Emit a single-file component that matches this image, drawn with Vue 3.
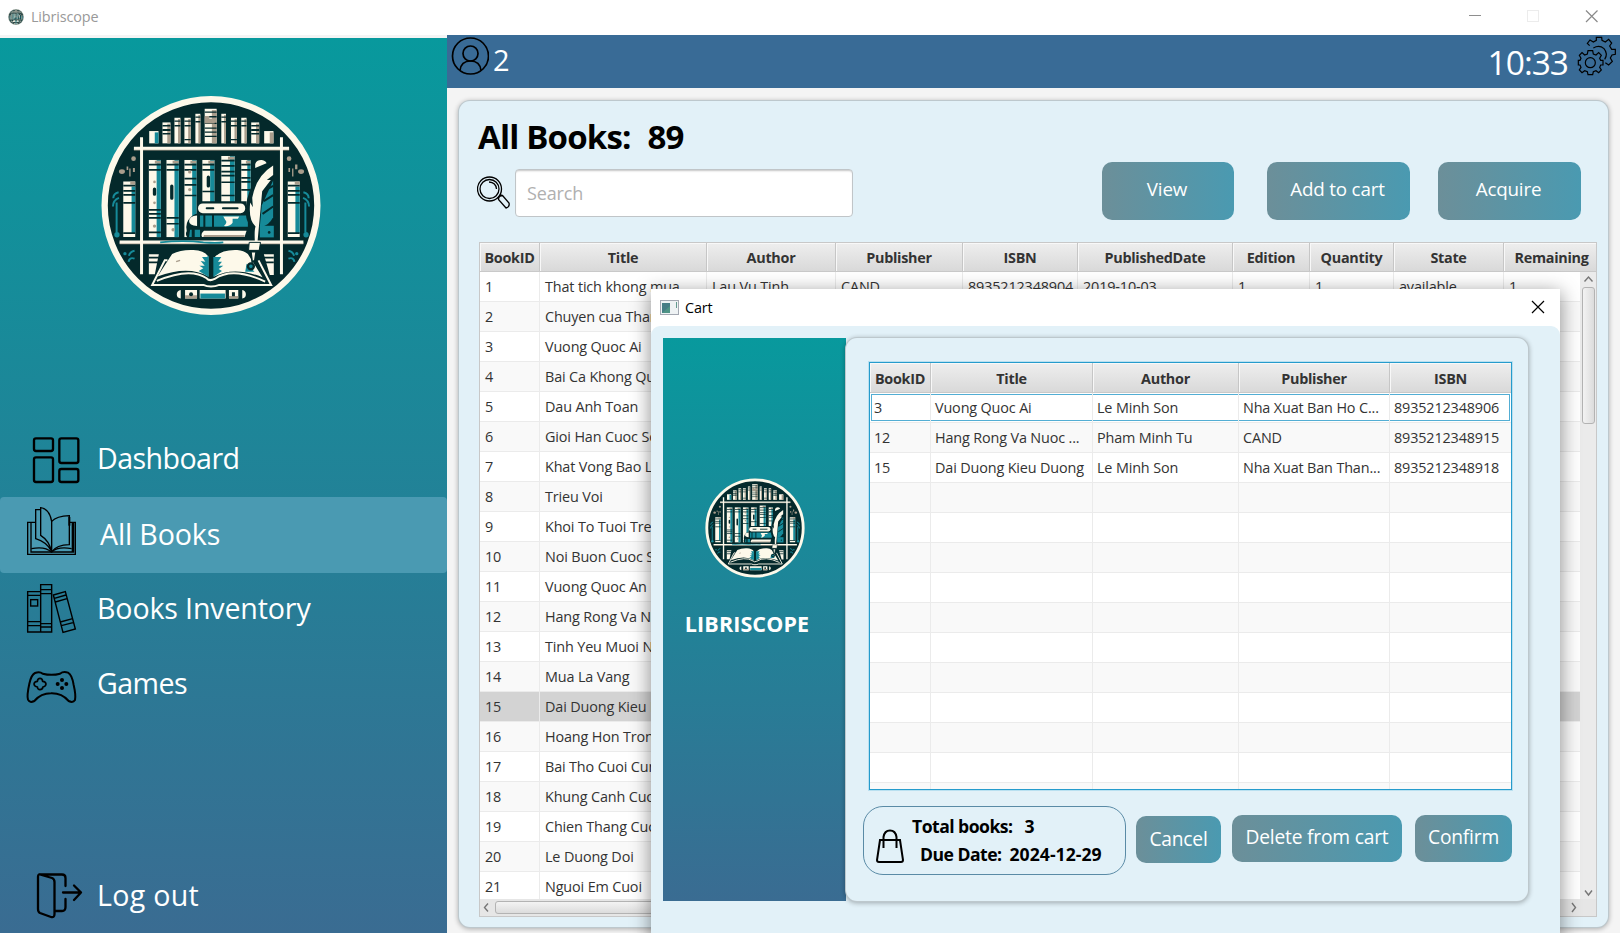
<script setup>
const columns = ['BookID', 'Title', 'Author', 'Publisher', 'ISBN', 'PublishedDate', 'Edition', 'Quantity', 'State', 'Remaining']
const titles = [
  'That tich khong mua', 'Chuyen cua Thanh', 'Vuong Quoc Ai', 'Bai Ca Khong Quen', 'Dau Anh Toan',
  'Gioi Han Cuoc Song', 'Khat Vong Bao La', 'Trieu Voi', 'Khoi To Tuoi Tre', 'Noi Buon Cuoc Song',
  'Vuong Quoc An', 'Hang Rong Va Nuoc', 'Tinh Yeu Muoi Nam', 'Mua La Vang', 'Dai Duong Kieu Duong',
  'Hoang Hon Trong', 'Bai Tho Cuoi Cung', 'Khung Canh Cuoi', 'Chien Thang Cuoi', 'Le Duong Doi', 'Nguoi Em Cuoi'
]
const books = titles.map((title, i) => [String(i + 1), title, '', '', '', '', '', '', '', ''])
books[0] = ['1', titles[0], 'Lau Vu Tinh', 'CAND', '8935212348904', '2019-10-03', '1', '1', 'available', '1']

const cartColumns = columns.slice(0, 5)
const cart = [
  ['3', 'Vuong Quoc Ai', 'Le Minh Son', 'Nha Xuat Ban Ho C...', '8935212348906'],
  ['12', 'Hang Rong Va Nuoc ...', 'Pham Minh Tu', 'CAND', '8935212348915'],
  ['15', 'Dai Duong Kieu Duong', 'Le Minh Son', 'Nha Xuat Ban Than...', '8935212348918']
]
while (cart.length < 14) cart.push(['', '', '', '', ''])

// shelf books in the emblem: x, y, width, height, shade
const topShelf = [
  [207, 151, 28, 37, 't'], [247, 125, 24, 63, 'g'], [283, 111, 18, 77, 'g'], [313, 111, 19, 77, 'g'],
  [346, 99, 15, 89, 'g'], [374, 84, 36, 104, 'g'], [424, 99, 14, 89, 'g'], [453, 111, 18, 77, 'g'],
  [484, 111, 16, 77, 'g'], [514, 125, 24, 63, 'g'], [553, 151, 28, 37, 'g']
]
const midShelf = [
  [206, 238, 36, 232, 't'], [259, 238, 37, 232, 't'], [313, 238, 36, 232, 't'],
  [367, 238, 36, 140, 't'], [424, 226, 40, 150, 't'], [484, 238, 28, 140, 't']
]
</script>

<template>
  <div class="window">
    <svg class="defs" aria-hidden="true">
      <symbol id="emblem" viewBox="62 43 662 664">
        <circle cx="393" cy="375" r="320" fill="#04292b" stroke="#fdf9ea" stroke-width="19" />
        <g v-for="(b, i) in topShelf" :key="'a' + i">
          <rect :x="b[0]" :y="b[1]" :width="b[2]" :height="b[3]" fill="#fdf9ea" />
          <rect :x="b[0] + b[2] * 0.6" :y="b[1] + 4" :width="b[2] * 0.4" :height="b[3] - 4" :fill="b[4] === 't' ? '#168a99' : '#a99d8c'" />
          <path v-if="b[3] > 40" :d="`M${b[0]} ${b[1] + 10}h${b[2]}m0 14h-${b[2]}`" stroke="#04292b" stroke-width="4" />
        </g>
        <path d="M247 147h24M247 159h24M514 147h24M514 159h24M313 177h19M453 177h18M374 128h36M374 142h36M374 154h36M374 167h36" stroke="#04292b" stroke-width="4" />
        <path d="M374 106h14v8h16v14h-30z" fill="#a99d8c" />
        <g v-for="(b, i) in midShelf" :key="'m' + i">
          <rect :x="b[0]" :y="b[1]" :width="b[2]" :height="b[3]" fill="#fdf9ea" />
          <rect :x="b[0] + b[2] * 0.65" :y="b[1]" :width="b[2] * 0.35" :height="b[3]" fill="#168a99" />
          <rect :x="b[0] + b[2] * 0.5" :y="b[1] + 2" :width="b[2] * 0.5" height="9" fill="#a99d8c" />
          <path :d="`M${b[0]} ${b[1] + 14}h${b[2]}m0 16h-${b[2]}`" stroke="#04292b" stroke-width="5" />
        </g>
        <path d="M206 388h36M206 400h36M206 412h36M206 456h36M259 412h37M259 430h37M313 294h36M313 313h36M313 345h36M367 333h36M424 273h40M424 285h40M424 305h40M424 345h40M484 292h28M484 304h28M484 328h28" stroke="#04292b" stroke-width="5" />
        <path d="M223 326v15M275 317v36M385 290v26" stroke="#04292b" stroke-width="10" stroke-linecap="round" />
        <g fill="#a99d8c">
          <circle cx="223" cy="304" r="4" /><circle cx="223" cy="367" r="4" /><circle cx="329" cy="274" r="5" />
          <circle cx="329" cy="327" r="5" /><circle cx="223" cy="437" r="5" /><circle cx="279" cy="448" r="5" />
        </g>
        <!-- outer books -->
        <path d="M129 303h36v167h-36zM624 303h36v167h-36z" fill="#fdf9ea" />
        <path d="M154 318h11v140h-11zM647 318h13v140h-13z" fill="#168a99" />
        <path d="M150 303h15v9h-15zM645 303h15v9h-15z" fill="#a99d8c" />
        <path d="M129 315h36M129 331h36M129 343h36M129 367h36M129 458h36M624 315h36M624 331h36M624 343h36M624 367h36M624 458h36" stroke="#04292b" stroke-width="5" />
        <path d="M109 366v90M115 335q-16 4-16 18M116 352q-18 7-18 26M677 366v90M671 335q16 4 16 18M670 352q18 7 18 26" stroke="#168a99" stroke-width="6" fill="none" />
        <g fill="#168a99"><circle cx="110" cy="463" r="8" /><circle cx="679" cy="463" r="8" /><circle cx="134" cy="520" r="5" /><circle cx="651" cy="520" r="5" /></g>
        <path d="M163 511q-14 3-17 15M163 535q-16-6-18 10M626 511q14 3 17 15M626 535q16-6 18 10" stroke="#168a99" stroke-width="6" fill="none" />
        <g fill="#a99d8c">
          <circle cx="160" cy="234" r="7" /><circle cx="628" cy="234" r="7" />
          <ellipse cx="125" cy="273" rx="9" ry="7" /><ellipse cx="664" cy="273" rx="9" ry="7" />
          <path d="M139 258h5v10h-5zM147 264h4v24h-4zM158 262h6v12h-6zM626 262h5v12h-5zM637 264h4v24h-4zM646 252h7v14h-7z" />
        </g>
        <!-- frame -->
        <path d="M161 207h467M118 489h553" stroke="#a99d8c" stroke-width="5" />
        <path d="M161 203h467M118 485h553M184 170v412M605 170v412" stroke="#fdf9ea" stroke-width="9" />
        <path d="M240 486q70-8 130 0q40 3 60 0" stroke="#168a99" stroke-width="5" fill="none" />
        <path d="M206 522h30l-12 60h-18zM552 522h30v62h-12z" fill="#fdf9ea" />
        <path d="M206 532h30M206 546h30M552 532h30M552 546h30" stroke="#04292b" stroke-width="5" />
        <!-- stacked books -->
        <path d="M366 362h134v116H328q-16-12-8-26q-6-26 14-44q12-10 24-10q-10-24 8-36z" fill="#04292b" />
        <rect x="354" y="369" width="142" height="29" rx="14" fill="#fdf9ea" />
        <path d="M380 383h20M429 383h44" stroke="#04292b" stroke-width="6" stroke-linecap="round" />
        <path d="M351 405q-24 2-24 17q0 14 24 15z" fill="#fdf9ea" />
        <path d="M360 405h10v34h-10zM376 405h20v34h-20zM402 405h102v34h-102z" fill="#168a99" />
        <path d="M430 408h48l-4 7h-16v12q-8 12-26 10q12-10 4-18z" fill="#fdf9ea" />
        <path d="M372 451h128l-6 19H366q-5-10 6-19z" fill="#fdf9ea" />
        <path d="M372 464h122v6H370z" fill="#a99d8c" />
        <path d="M330 448h5v22h-8zM344 448h16v22h-16z" fill="#168a99" />
        <path d="M540 436h42v35h-42z" fill="#168a99" /><circle cx="568" cy="456" r="4" fill="#04292b" />
        <path d="M526 262v-12q4-13 20-12q12 2 14 10z" fill="#fdf9ea" />
        <!-- open book -->
        <path d="M253 535l-38 77h155q8 8 23 8t23-8h158l-42-77" fill="#04292b" />
        <path d="M262 540h-8l-38 74h154q10 5 23 5t25-5h156l-38-74" stroke="#fdf9ea" stroke-width="6" fill="none" />
        <path d="M232 589l44-68q28-14 64-12q34 2 45 20v60q-60-35-153 0z" fill="#fdf9ea" />
        <path d="M402 589v-56q20-26 70-24q20 2 32 12l44 70q-85-34-146-2z" fill="#fdf9ea" />
        <path d="M386 526v64l-30-18l14-8l-12-8h16l-12-14l14 2l-10-14h14zM400 530v60l26-18l-10-6l14-10h-14l10-12h-12l10-14z" fill="#168a99" />
        <path d="M230 602q100-42 150-8q8 10 24 2q54-38 152 8" stroke="#fdf9ea" stroke-width="6" fill="none" />
        <path d="M288 544l12-4" stroke="#a99d8c" stroke-width="4" />
        <path d="M500 550l24 24h-28z" fill="#168a99" />
        <!-- quill -->
        <path d="M582 248q-72 38-84 130q-4 60 28 60q44 0 56-68z" fill="#04292b" />
        <path d="M580 300v110q-16 30-40 28l6-64z" fill="#168a99" />
        <path d="M580 344l-28 18M580 378l-32 22M580 316l-22 12" stroke="#04292b" stroke-width="6" />
        <path d="M580 255v28l-19 15h12l-26 34l-14 152h-8q-2-35 2-46q-22-20-16-72l8 14l-2-28q12-66 63-97z" fill="#fdf9ea" />
        <path d="M508 486h34l-4 24h-32z" fill="#fdf9ea" stroke="#04292b" stroke-width="3" />
        <path d="M513 514h16l-4 26l-8 5z" fill="#fdf9ea" stroke="#04292b" stroke-width="5" />
        <circle cx="513" cy="558" r="9" fill="#168a99" stroke="#04292b" stroke-width="7" />
        <!-- base ornament -->
        <path d="M302 629q-12 2-12 13t12 13zM487 629q11 2 11 13t-11 13zM315 629h36v26h-36zM359 629h78v26h-78zM447 629h28v26h-28z" fill="#fdf9ea" />
        <path d="M315 645h36v10h-36zM447 647h28v8h-28z" fill="#a99d8c" /><path d="M361 640h74v15h-74z" fill="#168a99" />
        <circle cx="333" cy="642" r="6" fill="#04292b" /><path d="M456 636h9v12h-9z" fill="#04292b" />
      </symbol>
    </svg>

    <header class="titlebar">
      <svg class="tiny"><use href="#emblem" /></svg>
      <span class="app-name">Libriscope</span>
      <svg class="controls" width="140" height="35" viewBox="0 0 140 35" fill="none">
        <path d="M4 15.500h12" stroke="#8e8e8e" />
        <rect x="62.500" y="10.500" width="11" height="11" stroke="#ececec" />
        <path d="M121 10.500l11.500 11.500M132.500 10.500L121 22" stroke="#8a8a8a" stroke-width="1.200" />
      </svg>
    </header>

    <div class="body">
      <aside class="sidebar">
        <svg class="logo"><use href="#emblem" /></svg>
        <nav>
          <a class="item">
            <svg width="97" height="77" viewBox="0 0 291 231" fill="none" stroke="#000" stroke-width="7">
              <rect x="102" y="55" width="57" height="38" rx="6" /><rect x="178" y="55" width="57" height="74" rx="6" />
              <rect x="102" y="112" width="57" height="74" rx="6" /><rect x="178" y="147" width="57" height="39" rx="6" />
            </svg>
            <span class="tight">Dashboard</span>
          </a>
          <a class="item active">
            <svg width="100" height="76" viewBox="0 231 300 228" fill="none" stroke="#000" stroke-width="4">
              <path d="M106 307H83V403H226V307H210" />
              <path d="M93 309V396H217V309M221 309V398" />
              <path d="M122 269H107V356Q140 366 154 393M122 263Q148 266 155 304V396Q148 362 122 346V263Z" />
              <path d="M155 304Q170 288 208 287V374Q170 374 155 396" /><path d="M208 291v26" stroke-width="6" />
              <path d="M94 386Q135 378 154 396Q175 378 215 386" />
            </svg>
            <span>All Books</span>
          </a>
          <a class="item up">
            <svg width="97" height="75" viewBox="0 459 291 225" fill="none" stroke="#000" stroke-width="4.200">
              <path d="M83 515H122V636H83ZM122 494H155V636H122ZM83 526H122M83 605H122M83 617H122M122 509H155M122 521H155M122 611H155M122 621H155" />
              <rect x="92" y="539" width="21" height="19" />
              <path d="M160 525L196 515L226 627L189 637ZM163 535L198 525M166 546L201 536M181 606L218 596M184 617L222 607" />
            </svg>
            <span>Books Inventory</span>
          </a>
          <a class="item up">
            <svg width="97" height="75" viewBox="0 684 291 225" fill="none" stroke="#000" stroke-width="6">
              <path d="M105 759Q119 753 128 761Q155 768 180 761Q190 753 204 758Q216 764 221 795Q228 825 225 840Q219 850 206 843Q185 819 153 820Q123 820 103 843Q89 850 84 839Q80 827 88 791Q94 764 105 759Z" />
              <path d="M120 775Q127 775 128 784Q137 785 138 792Q137 800 129 801Q127 809 120 809Q113 809 112 801Q103 800 102 792Q103 785 112 784Q113 775 120 775Z" stroke-width="5" />
              <g fill="#000" stroke="none"><circle cx="186" cy="780" r="6" /><circle cx="173" cy="792" r="6" /><circle cx="199" cy="792" r="6" /><circle cx="186" cy="804" r="6" /></g>
            </svg>
            <span class="tight">Games</span>
          </a>
        </nav>
        <a class="item logout">
          <svg width="97" height="60" viewBox="0 864 97 60" fill="none" stroke="#000" stroke-width="2.300" stroke-linecap="round" stroke-linejoin="round">
            <path d="M40 874.500L52 878Q54.500 879 54.500 882V914Q54.500 918 51 917L40 913Q38 912 38 909V877Q38 874 40 874.500H62Q65.500 874.500 65.500 878V886M65.500 899V907Q65.500 911 62 911H55" />
            <path d="M63 892.500H81M74 885.500L81 892.500L74 900" />
          </svg>
          <span>Log out</span>
        </a>
      </aside>

      <section class="content">
        <div class="topbar">
          <svg width="42" height="53" viewBox="0 0 42 53" fill="none" stroke="#000" stroke-width="1.700">
            <circle cx="23.500" cy="21" r="18" /><circle cx="23.500" cy="18.500" r="7.500" />
            <path d="M13 35.500Q14 26 23.500 26T34 35.500" />
          </svg>
          <span class="user">2</span>
          <span class="clock">10:33</span>
          <svg width="50" height="53" viewBox="0 9 150 159" fill="none" stroke="#000" stroke-width="3.600">
            <path d="M59 41L52 34L60 24L70 30L79 25V16H95L96 25L106 30L116 22L125 33L119 42L125 52H136V67L126 69L121 78L127 88L116 99L106 92" />
            <path d="M70 48Q88 38 102 50Q115 66 104 82" />
            <path d="M54 56H68L70 66L78 69L86 62L94 70L89 79L92 85H99V99H92L89 106L94 114L86 122L78 116L70 119L68 128H54L52 119L44 116L36 122L28 114L33 106L30 99H25V85H30L33 79L28 70L36 62L44 69L52 66Z" />
            <circle cx="61" cy="92" r="15" />
          </svg>
        </div>

        <main class="panel">
          <h1><span>All Books:</span><span>89</span></h1>
          <div class="tools">
            <svg width="37" height="48" viewBox="0 0 37 48" fill="none" stroke="#000" stroke-width="1.300">
              <circle cx="12.500" cy="19" r="12" /><circle cx="12.500" cy="19" r="9.500" />
              <path d="M12 12Q19 12.500 19.500 19M22 27l3-2M20.500 28.500l3.500-4M21.500 29.500q0-4 4-4L32 33q1 4-3 5z" />
            </svg>
            <div class="search">Search</div>
            <div class="actions">
              <button class="btn view">View</button>
              <button class="btn">Add to cart</button>
              <button class="btn">Acquire</button>
            </div>
          </div>

          <div class="table">
            <div class="row head"><div v-for="c in columns" :key="c">{{ c }}</div></div>
            <div class="viewport">
              <div class="rows">
                <div v-for="b in books" :key="b[0]" class="row" :class="{ selected: b[0] === '15' }">
                  <div v-for="(v, j) in b" :key="j">{{ v }}</div>
                </div>
              </div>
              <div class="vbar">
                <svg width="17" height="15" viewBox="0 0 17 15"><path d="M4.500 9.500l4-4.500 4 4.500" /></svg>
                <div class="vthumb"></div>
                <svg class="down" width="17" height="15" viewBox="0 0 17 15"><path d="M5 6.500l3.500 4.500L12 6.500" /></svg>
              </div>
            </div>
            <div class="hbar">
              <svg width="15" height="17" viewBox="0 0 15 17"><path d="M8 4.500L4.500 8.500l3.500 4" /></svg>
              <div class="hthumb"></div>
              <svg width="31" height="17" viewBox="0 0 31 17"><path d="M7 4l3.500 4.500L7 13" /></svg>
            </div>
          </div>
        </main>
      </section>
    </div>

    <div class="dialog">
      <div class="dialog-title">
        <svg width="19" height="16" viewBox="0 0 19 16">
          <rect x=".5" y=".5" width="18" height="14" fill="#eef2f4" stroke="#a3a8b2" />
          <rect x="2" y="3" width="8" height="10" fill="#4f9486" /><path d="M2 3h8v3l-8 7z" fill="#467e86" /><path d="M16.500 2v6" stroke="#63998f" />
        </svg>
        <span>Cart</span>
        <svg class="x" width="14" height="14" viewBox="0 0 14 14"><path d="M1 1l12 12M13 1L1 13" stroke="#000" stroke-width="1.200" /></svg>
      </div>
      <div class="dialog-body">
        <div class="brand">
          <svg><use href="#emblem" /></svg>
          <strong>LIBRISCOPE</strong>
        </div>
        <div class="cart">
          <div class="cart-table">
            <div class="row head"><div v-for="c in cartColumns" :key="c">{{ c }}</div></div>
            <div v-for="(b, i) in cart" :key="i" class="row" :class="{ focused: i === 0 }">
              <div v-for="(v, j) in b" :key="j">{{ v }}</div>
            </div>
          </div>
          <div class="footer">
            <div class="summary">
              <svg width="28" height="34" viewBox="0 0 28 34" fill="none" stroke="#000" stroke-width="2">
                <path d="M4 11H24L27 31Q27 33 25 33H3Q1 33 1 31ZM7.500 19V8Q8.500 1.500 14 1.500T20.500 8V19" />
              </svg>
              <div class="facts">
                <p><span>Total books:</span><span>3</span></p>
                <p class="due"><span>Due Date:</span><span class="date">2024-12-29</span></p>
              </div>
            </div>
            <button class="btn cancel">Cancel</button>
            <button class="btn delete">Delete from cart</button>
            <button class="btn confirm">Confirm</button>
          </div>
        </div>
      </div>
    </div>
  </div>
</template>

<style>
body { overflow: hidden; }
</style>

<style scoped>
* { box-sizing: border-box; }
.window { position: relative; width: 1620px; height: 933px; overflow: hidden; background: #f4f4f4; display: flex; flex-direction: column; font-family: "Open Sans", "Noto Sans", sans-serif; font-size: 14.4px; letter-spacing: -0.01em; color: #333; }
.defs { position: absolute; width: 0; height: 0; }
span, strong { white-space: pre; }
svg { flex: none; display: block; }

.titlebar { height: 35px; flex: none; background: #fff; display: flex; align-items: center; padding-left: 8px; }
.tiny { width: 16px; height: 16px; margin-bottom: 2px; }
.app-name { margin-left: 7px; color: #999; padding-bottom: 2px; }
.controls { margin-left: auto; margin-right: 15px; }

.body { flex: 1; min-height: 0; display: flex; }
.sidebar { width: 447px; margin-top: 3px; display: flex; flex-direction: column; background: linear-gradient(#08999d, #3a6c92); }
.logo { width: 220px; height: 221px; margin: 57px 0 0 101px; }
nav { margin-top: 104px; }
.item { display: flex; align-items: center; height: 75px; color: #fff; font-size: 28.6px; }
.item span { padding-bottom: 3px; }
.item .tight { letter-spacing: -0.02em; }
.item.up span { padding-bottom: 6px; }
.item:first-child { height: 77px; }
.item.active { height: 76px; background: #4a9ab2; border-radius: 4px; }
.item.logout { height: 60px; margin-top: auto; margin-bottom: 9px; }
.item.logout span { padding-bottom: 0; letter-spacing: 0.01em; }

.content { flex: 1; display: flex; flex-direction: column; }
.topbar { height: 53px; flex: none; background: #396b96; display: flex; align-items: center; color: #fff; }
.user { font-size: 29px; margin-left: 4px; padding-bottom: 4px; }
.clock { font-size: 33.5px; margin-left: auto; margin-right: 2px; letter-spacing: -0.03em; }

.panel { width: 1149px; height: 826px; margin: 13px 0 0 12px; padding: 16px 0 0 20px; background: #e2f1f8; border-radius: 11px; box-shadow: 0 0 0 1px #bdc8cd, 0 1px 5px 1px rgba(0, 0, 0, .3); }
h1 { margin: 0 0 0 -1px; height: 40px; line-height: 40px; font-size: 33px; color: #000; display: flex; gap: 17px; letter-spacing: -0.025em; }
.tools { display: flex; height: 85px; padding-top: 4px; margin-left: -2px; }
.tools > svg { margin: 9px 1px 0 0; }
.search { width: 338px; height: 48px; margin-top: 8px; background: #fff; border: 1px solid #c0c5c8; border-radius: 4px; box-shadow: inset 0 2px 2px -1px #c5c5c5; padding-left: 11px; line-height: 46px; font-size: 18px; color: #b0b0b0; }
.actions { display: flex; gap: 28px; margin: 1px 0 0 249px; }
.btn { border: 0; padding: 0 0 5px; font-family: inherit; font-size: 19.200px; letter-spacing: -0.01em; color: #fff; white-space: nowrap; background: linear-gradient(90deg, #6c8f99, #4a9ab1); border-radius: 10px; height: 58px; width: 143px; }
.btn.view { width: 132px; margin-right: 5px; padding-right: 6px; }
.actions .btn { font-size: 18.800px; padding-bottom: 4px; padding-right: 2px; }

.table { width: 1118px; height: 675px; display: flex; flex-direction: column; background: #fff; border: 1px solid #c8c8c8; overflow: hidden; }
.row { display: grid; grid-template-columns: 60px 167px 129px 127px 115px 155px 77px 84px 110px 96px; height: 30px; border-bottom: 1px solid #ebebeb; }
.row > div { padding-left: 5px; line-height: 29px; white-space: nowrap; overflow: hidden; border-right: 1px solid #ebebeb; }
.row:nth-child(even) { background: #f9f9f9; }
.row.selected { background: #d3d3d3; }
.row.head { flex: none; height: 29px; background: linear-gradient(#eee, #d9d9d9); border-color: #c9c9c9; }
.row.head > div { padding: 0; line-height: 29px; font-weight: 700; letter-spacing: -0.02em; text-align: center; border-color: #c6c6c6; box-shadow: inset 1px 1px 0 #f8f8f8; }
.viewport { flex: 1; min-height: 0; display: flex; }
.rows { width: 1100px; flex: none; overflow: hidden; }
.vbar { flex: 1; background: #ebebeb; display: flex; flex-direction: column; }
.vbar path, .hbar path { fill: none; stroke: #777; stroke-width: 1.400; }
.vthumb { width: 13px; height: 137px; margin-left: 2px; border: 1px solid #b3b3b3; border-radius: 3px; background: linear-gradient(90deg, #f3f3f3, #dcdcdc); }
.down { margin-top: auto; }
.hbar { height: 17px; flex: none; background: #e6e6e6; display: flex; }
.hthumb { flex: 1; height: 13px; margin-top: 2px; margin-right: 340px; border: 1px solid #b3b3b3; border-radius: 3px; background: linear-gradient(#f3f3f3, #dcdcdc); }

.dialog { position: absolute; left: 651px; top: 289px; width: 909px; height: 660px; background: #fff; box-shadow: 0 4px 18px 1px rgba(0, 0, 0, .42); }
.dialog-title { height: 37px; display: flex; align-items: center; padding-left: 9px; color: #000; }
.dialog-title span { margin-left: 6px; }
.dialog-title .x { margin: 0 15px 2px auto; }
.dialog-body { height: 623px; background: #e2f1f8; border-radius: 9px 9px 0 0; display: flex; padding: 12px 0 0 12px; }
.brand { width: 183px; height: 563px; background: linear-gradient(#08999d, #3a6c92); display: flex; flex-direction: column; align-items: center; color: #fff; }
.brand svg { width: 100px; height: 100px; margin-top: 140px; }
.brand strong { font-size: 21.500px; letter-spacing: 0.005em; margin: 31px 15px 0 0; }
.cart { width: 682px; height: 563px; border-radius: 11px; background: #e2f1f8; box-shadow: 0 0 0 1px #bdc8cd, 0 1px 5px 1px rgba(0, 0, 0, .3); padding: 24px 0 0 17px; }
.cart-table { width: 643px; height: 428px; margin-left: 6px; background: #fff; border: 1px solid #259bcc; box-shadow: 0 0 0 1px #b9e0f0; overflow: hidden; }
.cart-table .row { grid-template-columns: 61px 162px 146px 151px 122px; }
.cart-table .row > div { padding-left: 4px; }
.cart-table .row:nth-child(odd) { background: #f9f9f9; }
.cart-table .row:nth-child(2n) { background: #fff; }
.cart-table .row.head { height: 30px; background: linear-gradient(#eee, #d9d9d9); }
.cart-table .row.head > div { padding: 0; line-height: 31px; }
.cart-table .row.focused { box-shadow: inset 0 0 0 1px #fff, inset 0 0 0 2px #53aed4; }
.footer { display: flex; align-items: flex-start; margin-top: 16px; }
.summary { width: 263px; height: 69px; border: 1.500px solid #5a8ba6; border-radius: 20px; display: flex; }
.summary svg { margin: 22px 0 0 12px; }
.facts { margin: 5px 0 0 8px; color: #000; font-weight: 700; font-size: 17.600px; letter-spacing: -0.03em; }
.facts p { margin: 0; line-height: 28px; display: flex; gap: 12px; }
.facts .due { padding-left: 8px; gap: 8px; }
.facts .date { letter-spacing: 0.002em; }
.cancel { width: 85px; height: 47px; margin: 10px 0 0 10px; padding-bottom: 2px; }
.delete { width: 170px; height: 47px; margin: 9px 0 0 11px; padding-bottom: 4px; }
.confirm { width: 97px; height: 47px; margin: 9px 0 0 13px; padding-bottom: 4px; }
</style>
